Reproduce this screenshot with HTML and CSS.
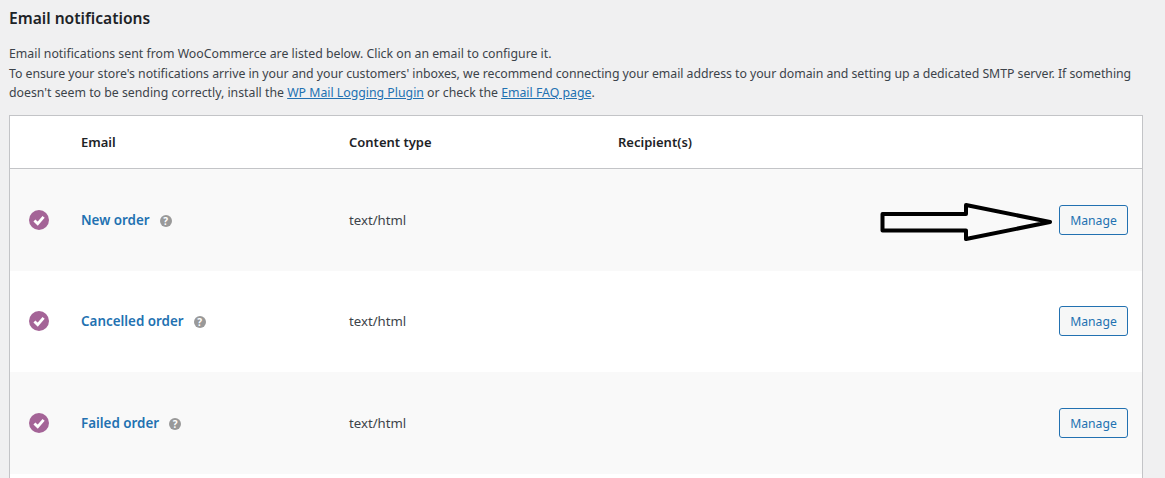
FILE: index.html
```html
<!DOCTYPE html>
<html lang="en">

<head>
    <meta charset="UTF-8">
    <meta name="viewport" content="width=device-width, initial-scale=1.0">
    <title>Email notifications</title>
    <link rel="stylesheet" href="styles.css">
</head>

<body>
    <div class="wrap">
        <h2 class="title">Email notifications</h2>
        <p class="intro">Email notifications sent from WooCommerce are listed below. Click on an email to configure it.<br>
            <span class="tight">To ensure your store's notifications arrive in your and your customers' inboxes, we recommend connecting your email address to your domain and setting up a dedicated SMTP server. If something</span> doesn't seem to be sending correctly, install the <a href="#">WP Mail Logging Plugin</a> or check the <a href="#">Email FAQ page</a>.</p>

        <div class="table-box">
            <table class="emails">
                <thead>
                    <tr>
                        <th class="col-status"></th>
                        <th class="col-name">Email</th>
                        <th class="col-type">Content type</th>
                        <th class="col-to">Recipient(s)</th>
                        <th class="col-action"></th>
                    </tr>
                </thead>
                <tbody>
                    <tr>
                        <td>
                            <svg class="check" viewBox="0 0 20 20"><circle cx="10" cy="10" r="10" fill="#a46497"/><path d="M5.400 10.400 8.700 13.600 14.600 6.800" fill="none" stroke="#fff" stroke-width="2.800"/></svg>
                        </td>
                        <td><a class="name" href="#">New order</a><span class="help">?</span></td>
                        <td>text/html</td>
                        <td></td>
                        <td><a class="manage" href="#">Manage</a></td>
                    </tr>
                    <tr>
                        <td>
                            <svg class="check" viewBox="0 0 20 20"><circle cx="10" cy="10" r="10" fill="#a46497"/><path d="M5.400 10.400 8.700 13.600 14.600 6.800" fill="none" stroke="#fff" stroke-width="2.800"/></svg>
                        </td>
                        <td><a class="name" href="#">Cancelled order</a><span class="help">?</span></td>
                        <td>text/html</td>
                        <td></td>
                        <td><a class="manage" href="#">Manage</a></td>
                    </tr>
                    <tr>
                        <td>
                            <svg class="check" viewBox="0 0 20 20"><circle cx="10" cy="10" r="10" fill="#a46497"/><path d="M5.400 10.400 8.700 13.600 14.600 6.800" fill="none" stroke="#fff" stroke-width="2.800"/></svg>
                        </td>
                        <td><a class="name" href="#">Failed order</a><span class="help">?</span></td>
                        <td>text/html</td>
                        <td></td>
                        <td><a class="manage" href="#">Manage</a></td>
                    </tr>
                </tbody>
            </table>
        </div>

        <svg class="arrow" width="180" height="44" viewBox="880 200 180 44">
            <path d="M882.500 214H966V205L1050 222 966 239V230.500H882.500Z" fill="none" stroke="#000" stroke-width="4" stroke-linejoin="round"/>
        </svg>
    </div>
</body>

</html>
```

FILE: styles.css
```css
html,
body {
    height: 478px;
    overflow: hidden;
}

body {
    margin: 0;
    background-color: #f0f0f1;
    color: #3c434a;
    font-family: "Noto Sans", sans-serif;
    font-size: 12.3px;
    line-height: 19.5px;
}

a {
    color: #2271b1;
}

.wrap {
    position: relative;
    display: flex;
    flex-direction: column;
    box-sizing: border-box;
    height: 478px;
    padding: 0 22px 0 9px;
}

.title {
    margin: 0;
    padding-top: 7px;
    color: #1d2327;
    font-size: 15.6px;
    font-weight: 600;
    line-height: 23px;
}

.intro {
    margin: 14px 0 12px;
}

.tight {
    letter-spacing: -0.042px;
}

.table-box {
    flex: 1;
    border: 1px solid #c3c4c7;
    border-bottom: 0;
    background-color: #fff;
}

.emails {
    width: 100%;
    table-layout: fixed;
    border-collapse: separate;
    border-spacing: 0;
    font-size: 13.2px;
}

.emails th {
    height: 50px;
    padding: 2px 0 0;
    border-bottom: 1px solid #c3c4c7;
    color: #1d2327;
    font-size: 13px;
    font-weight: 600;
    text-align: left;
}

.emails td {
    height: 102px;
    padding: 2px 0 0;
    box-sizing: border-box;
}

.emails tbody tr:nth-child(even) td {
    height: 101px;
}

.emails tbody tr:nth-child(odd) {
    background-color: #f9f9f9;
}

.col-status {
    width: 71px;
}

.col-name {
    width: 268px;
}

.col-type {
    width: 269px;
}

.col-action {
    width: 83px;
}

.check {
    display: block;
    width: 20px;
    height: 20px;
    margin: -2px 0 0 18.500px;
}

.name {
    font-size: 13.4px;
    font-weight: 600;
    text-decoration: none;
}

.help {
    display: inline-block;
    width: 12px;
    height: 12px;
    margin-left: 10px;
    border-radius: 50%;
    background-color: #999;
    color: #fff;
    font-size: 10px;
    font-weight: 700;
    line-height: 12px;
    text-align: center;
}

.manage {
    display: block;
    width: 67px;
    height: 28px;
    margin-top: -2px;
    border: 1px solid #2271b1;
    border-radius: 3px;
    background-color: #f6f7f7;
    font-size: 12.200px;
    line-height: 30px;
    text-align: center;
    text-decoration: none;
}

.arrow {
    position: absolute;
    top: 200px;
    left: 880px;
}
```
